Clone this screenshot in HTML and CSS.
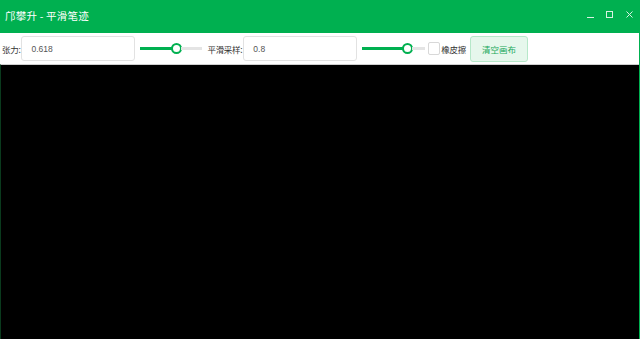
FILE: index.html
```html
<!DOCTYPE html>
<html lang="zh">
<head>
<meta charset="utf-8">
<link rel="stylesheet" href="styles.css">
</head>
<body>
<div class="window">
  <div class="titlebar">
    <span class="title">邝攀升 - 平滑笔迹</span>
    <div class="controls">
      <span class="ctl min"></span>
      <span class="ctl max"></span>
      <svg class="ctl close" width="7" height="7" viewBox="0 0 7 7"><path d="M0.5 0.5L6.5 6.5M6.5 0.5L0.5 6.5" stroke="#d8f2e2" stroke-width="1"/></svg>
    </div>
  </div>
  <div class="toolbar">
    <span class="label">张力:</span>
    <div class="input">0.618</div>
    <div class="slider s1"><div class="fill"></div><div class="thumb"></div><div class="rest"></div></div>
    <span class="label l2">平滑采样:</span>
    <div class="input">0.8</div>
    <div class="slider s2"><div class="fill"></div><div class="thumb"></div><div class="rest"></div></div>
    <span class="check"></span>
    <span class="label l3">橡皮擦</span>
    <div class="btn">清空画布</div>
  </div>
  <div class="canvas"></div>
</div>
</body>
</html>
```
FILE: styles.css
```css
html, body {
  margin: 0;
  padding: 0;
  width: 640px;
  height: 339px;
  overflow: hidden;
  font-family: "Noto Sans CJK SC", "Noto Sans", sans-serif;
}
.window {
  width: 640px;
  height: 339px;
  display: flex;
  flex-direction: column;
  box-sizing: border-box;
  border-right: 1px solid #00b050;
}
.titlebar {
  height: 33px;
  background: #00b050;
  display: flex;
  align-items: center;
  justify-content: space-between;
  padding-left: 5px;
  color: #fff;
}
.title {
  font-size: 10.5px;
  line-height: 12px;
  margin-top: -1px;
  letter-spacing: 0.2px;
}
.controls {
  display: flex;
  align-items: center;
  margin-top: -4px;
}
.ctl {
  display: block;
}
.min {
  width: 7px;
  height: 1px;
  background: #d8f2e2;
  margin-right: 12px;
  margin-top: 5px;
}
.max {
  width: 5px;
  height: 5px;
  border: 1px solid #d8f2e2;
  margin-right: 13px;
}
.close {
  margin-right: 6px;
}
.toolbar {
  height: 31px;
  background: #fff;
  display: flex;
  align-items: center;
  padding-left: 2px;
  font-size: 8.5px;
  color: #333;
}
.label {
  line-height: 12px;
  letter-spacing: -0.3px;
}
.input {
  width: 114px;
  height: 25px;
  box-sizing: border-box;
  border: 1px solid #e2e2e2;
  border-radius: 3px;
  margin-left: 1px;
  padding-left: 9px;
  display: flex;
  align-items: center;
  color: #555;
  font-size: 8.5px;
  font-family: "Liberation Sans", sans-serif;
}
.slider {
  display: flex;
  align-items: center;
  margin-left: 5px;
  width: 62px;
}
.fill {
  height: 3px;
  background: #00b050;
}
.rest {
  height: 3px;
  background: #e4e4e4;
  flex: 1;
}
.thumb {
  width: 7px;
  height: 7px;
  border: 2px solid #00b050;
  border-radius: 50%;
  background: #fff;
  margin: 0 -1px;
  flex: none;
}
.s1 .fill { width: 32px; }
.s2 .fill { width: 41px; }
.s2 { width: 63px; }
.l2 { margin-left: 5px; }
.check {
  width: 10px;
  height: 11px;
  border: 1px solid #d8d8d8;
  border-radius: 2px;
  margin-left: 3px;
  background: #fff;
}
.l3 { margin-left: 1px; }
.btn {
  margin-left: 4px;
  width: 58px;
  height: 26px;
  box-sizing: border-box;
  border: 1px solid #b6e8c9;
  background: #e6f7ec;
  border-radius: 3px;
  color: #19a85a;
  display: flex;
  align-items: center;
  justify-content: center;
  font-size: 8.5px;
}
.canvas {
  flex: 1;
  background: #000;
  border-top: 1px solid #cfcfcf;
  border-left: 1px solid #0a3a1d;
}
```
